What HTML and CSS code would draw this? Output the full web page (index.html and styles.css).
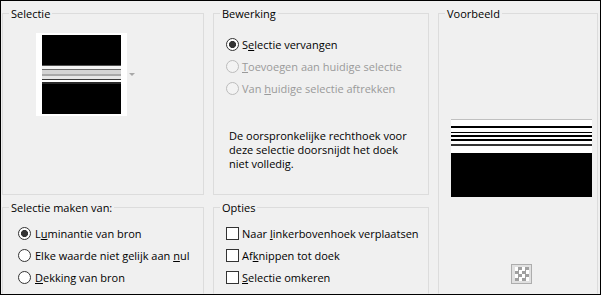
FILE: index.html
```html
<!DOCTYPE html>
<html lang="nl">
<head>
    <meta charset="UTF-8">
    <title>Selectie uit masker</title>
    <link rel="stylesheet" href="styles.css">
</head>
<body>
    <div class="dialog">
        <fieldset class="group group-selectie">
            <legend>Selectie</legend>
            <div class="thumb-row">
                <div class="thumb"><div class="thumb-img"></div></div>
                <span class="drop-arrow"></span>
            </div>
        </fieldset>

        <fieldset class="group group-bewerking">
            <legend>Bewerking</legend>
            <div class="options">
                <label class="option"><span class="radio checked"></span><span>S<u>e</u>lectie vervangen</span></label>
                <label class="option disabled"><span class="radio"></span><span><u>T</u>oevoegen aan huidige selectie</span></label>
                <label class="option disabled"><span class="radio"></span><span>Van <u>h</u>uidige selectie aftrekken</span></label>
                <p class="note">De oorspronkelijke rechthoek voor<br>deze selectie doorsnijdt het doek<br>niet volledig.</p>
            </div>
        </fieldset>

        <fieldset class="group group-voorbeeld">
            <legend>Voorbeeld</legend>
            <div class="preview">
                <div class="preview-img"></div>
                <button class="checker-btn"><span class="checker"></span></button>
            </div>
        </fieldset>

        <fieldset class="group group-bron">
            <legend>Selectie maken van:</legend>
            <div class="options bron-options">
                <label class="option"><span class="radio checked"></span><span>L<u>u</u>minantie van bron</span></label>
                <label class="option"><span class="radio"></span><span>Elke waarde niet gelijk aan <u>n</u>ul</span></label>
                <label class="option"><span class="radio"></span><span><u>D</u>ekking van bron</span></label>
            </div>
        </fieldset>

        <fieldset class="group group-opties">
            <legend>Opties</legend>
            <div class="options opties-options">
                <label class="option"><span class="check"></span><span>Naar <u>l</u>inkerbovenhoek verplaatsen</span></label>
                <label class="option"><span class="check"></span><span>Af<u>k</u>nippen tot doek</span></label>
                <label class="option"><span class="check"></span><span><u>S</u>electie omkeren</span></label>
            </div>
        </fieldset>
    </div>
</body>
</html>
```

FILE: styles.css
```css
body {
    margin: 0;
    width: 601px;
    height: 295px;
    box-sizing: border-box;
    border: 1px solid #000;
    background-color: #f0f0f0;
    overflow: hidden;
    font-family: "Open Sans", sans-serif;
    font-size: 11px;
    color: #000;
}

.dialog {
    display: grid;
    grid-template-columns: 202px 216px 160px;
    grid-template-rows: 189px 94px;
    column-gap: 9px;
    row-gap: 5px;
    padding: 5px 0 0 1px;
}

.group {
    margin: 0;
    padding: 0;
    min-width: 0;
    border: 1px solid #dcdcdc;
    border-bottom-color: transparent;
}

.group-selectie,
.group-bewerking {
    border-bottom-color: #dcdcdc;
}

.group legend {
    margin-left: 6px;
    padding: 0 2px;
    line-height: 15px;
}

.group-voorbeeld {
    grid-column: 3;
    grid-row: 1 / span 2;
}

.group-bron {
    grid-column: 1;
    grid-row: 2;
}

.group-opties {
    grid-column: 2;
    grid-row: 2;
}

/* Selectie thumbnail */
.thumb-row {
    display: flex;
    align-items: center;
    gap: 2px;
    margin: 12px 0 0 33px;
}

.thumb {
    width: 91px;
    height: 83px;
    box-sizing: border-box;
    padding: 2px 6px;
    background-color: #fff;
}

.thumb-img {
    width: 79px;
    height: 79px;
    background: linear-gradient(to bottom,
        #000 0 30px,
        #505050 30px 31px,
        #f4f4f4 31px 34px,
        #6a6a6a 34px 35px,
        #d4d4d4 35px 39px,
        #a8a8a8 39px 41px,
        #e6e6e6 41px 44px,
        #3c3c3c 44px 45px,
        #fff 45px 47px,
        #2a2a2a 47px 49px,
        #000 49px);
}

.drop-arrow {
    width: 0;
    height: 0;
    border-left: 3px solid transparent;
    border-right: 3px solid transparent;
    border-top: 3px solid #a8a8a8;
}

/* Radio and checkbox rows */
.options {
    padding: 12px 0 0 12px;
}

.option {
    display: flex;
    align-items: center;
    gap: 3px;
    height: 22px;
    white-space: nowrap;
}

.option u {
    text-underline-offset: 1px;
}

.option.disabled {
    color: #9a9a9a;
}

.radio {
    flex: none;
    width: 13px;
    height: 13px;
    box-sizing: border-box;
    border: 1px solid #333;
    border-radius: 50%;
    background-color: #fff;
}

.radio.checked {
    background: radial-gradient(circle, #333 0 3.3px, #fff 3.8px);
}

.option.disabled .radio {
    border-color: #bcbcbc;
    background-color: #f3f3f3;
}

.check {
    flex: none;
    width: 13px;
    height: 13px;
    box-sizing: border-box;
    border: 1px solid #333;
    background-color: #fff;
}

.bron-options {
    padding: 7px 0 0 15px;
}

.bron-options .option {
    gap: 4px;
}

.opties-options {
    padding-top: 7px;
}

.note {
    margin: 30px 0 0 3px;
    line-height: 14px;
}

/* Voorbeeld */
.preview {
    display: flex;
    flex-direction: column;
    align-items: center;
    width: 141px;
    margin: 98px 0 0 12px;
}

.preview-img {
    width: 141px;
    height: 78px;
    background: linear-gradient(to bottom,
        #c0c0c0 0 1px,
        #fff 1px 7px,
        #000 7px 9px,
        #fff 9px 13px,
        #000 13px 14px,
        #fff 14px 16px,
        #000 16px 18px,
        #fff 18px 20px,
        #000 20px 22px,
        #fff 22px 25px,
        #333 25px 27px,
        #fff 27px 34px,
        #000 34px);
}

.checker-btn {
    display: flex;
    align-items: center;
    justify-content: center;
    width: 21px;
    height: 20px;
    margin-top: 67px;
    padding: 0;
    border: 1px solid #adadad;
    background-color: #e1e1e1;
}

.checker {
    width: 14px;
    height: 14px;
    background-color: #fff;
    background-image: conic-gradient(#a0a0a0 25%, #fff 0 50%, #a0a0a0 0 75%, #fff 0);
    background-size: 7px 7px;
}
```
